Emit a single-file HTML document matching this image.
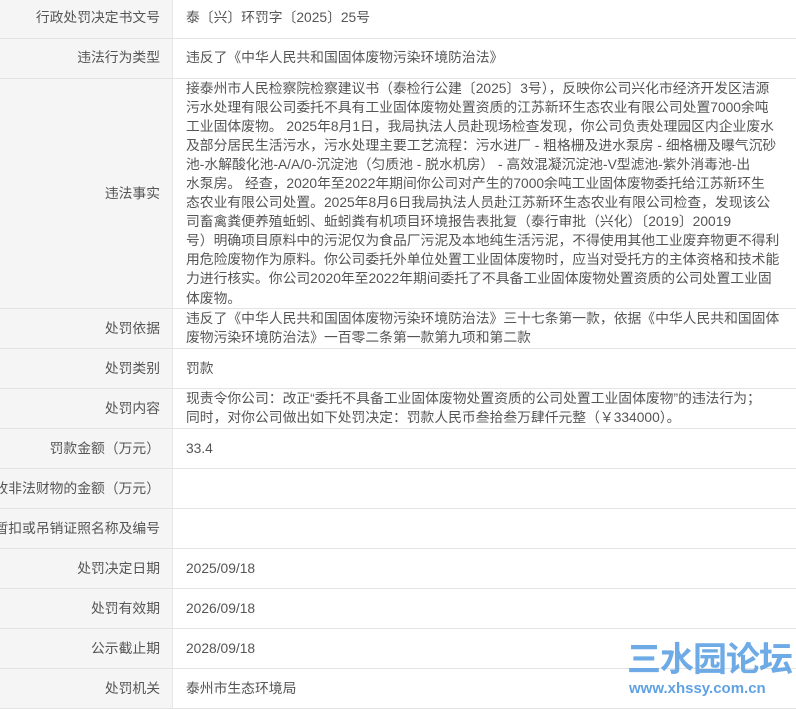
<!DOCTYPE html>
<html><head><meta charset="utf-8"><style>
body{margin:0;width:796px;height:706px;overflow:hidden;background:#fff;font-family:"Liberation Sans","Noto Sans CJK SC",sans-serif;font-size:13.8px;color:#555;position:relative}
table{border-collapse:collapse;position:absolute;left:0;top:-2px;width:796px;table-layout:fixed}
td{border-bottom:1px solid #e3e3e3;padding:0;vertical-align:middle;line-height:19.1px}
td.l{width:160px;background:#f5f5f5;text-align:right;padding-right:12px;white-space:nowrap;overflow:hidden;direction:rtl;border-right:1px solid #e8e8e8}
td.v{padding-left:13px;white-space:nowrap;overflow:hidden}
.wm{position:absolute;left:627px;top:636px;color:#5fa2e4;font-weight:bold;font-size:34px;letter-spacing:-1px;line-height:42px;font-family:"Noto Sans CJK SC",sans-serif;white-space:nowrap;opacity:.9}
.wm2{position:absolute;left:629px;top:680px;color:#5fa2e4;font-weight:bold;font-size:15px;line-height:18px;white-space:nowrap}
</style></head><body>
<table>
<tr style="height:40px"><td class="l">行政处罚决定书文号</td><td class="v">泰〔兴〕环罚字〔2025〕25号</td></tr>
<tr style="height:40px"><td class="l">违法行为类型</td><td class="v">违反了《中华人民共和国固体废物污染环境防治法》</td></tr>
<tr style="height:230px"><td class="l">违法事实</td><td class="v">接泰州市人民检察院检察建议书（泰检行公建〔2025〕3号），反映你公司兴化市经济开发区洁源<br>污水处理有限公司委托不具有工业固体废物处置资质的江苏新环生态农业有限公司处置7000余吨<br>工业固体废物。 2025年8月1日，我局执法人员赴现场检查发现，你公司负责处理园区内企业废水<br>及部分居民生活污水，污水处理主要工艺流程：污水进厂 - 粗格栅及进水泵房 - 细格栅及曝气沉砂<br>池-水解酸化池-A/A/0-沉淀池（匀质池 - 脱水机房） - 高效混凝沉淀池-V型滤池-紫外消毒池-出<br>水泵房。 经查，2020年至2022年期间你公司对产生的7000余吨工业固体废物委托给江苏新环生<br>态农业有限公司处置。2025年8月6日我局执法人员赴江苏新环生态农业有限公司检查，发现该公<br>司畜禽粪便养殖蚯蚓、蚯蚓粪有机项目环境报告表批复（泰行审批（兴化）〔2019〕20019<br>号）明确项目原料中的污泥仅为食品厂污泥及本地纯生活污泥，不得使用其他工业废弃物更不得利<br>用危险废物作为原料。你公司委托外单位处置工业固体废物时，应当对受托方的主体资格和技术能<br>力进行核实。你公司2020年至2022年期间委托了不具备工业固体废物处置资质的公司处置工业固<br>体废物。</td></tr>
<tr style="height:40px"><td class="l">处罚依据</td><td class="v">违反了《中华人民共和国固体废物污染环境防治法》三十七条第一款，依据《中华人民共和国固体<br>废物污染环境防治法》一百零二条第一款第九项和第二款</td></tr>
<tr style="height:40px"><td class="l">处罚类别</td><td class="v">罚款</td></tr>
<tr style="height:40px"><td class="l">处罚内容</td><td class="v">现责令你公司：改正“委托不具备工业固体废物处置资质的公司处置工业固体废物”的违法行为；<br>同时，对你公司做出如下处罚决定：罚款人民币叁拾叁万肆仟元整（￥334000）。</td></tr>
<tr style="height:40px"><td class="l">罚款金额（万元）</td><td class="v">33.4</td></tr>
<tr style="height:40px"><td class="l">没收违法所得、没收非法财物的金额（万元）</td><td class="v"></td></tr>
<tr style="height:40px"><td class="l">暂扣或吊销证照名称及编号</td><td class="v"></td></tr>
<tr style="height:40px"><td class="l">处罚决定日期</td><td class="v">2025/09/18</td></tr>
<tr style="height:40px"><td class="l">处罚有效期</td><td class="v">2026/09/18</td></tr>
<tr style="height:40px"><td class="l">公示截止期</td><td class="v">2028/09/18</td></tr>
<tr style="height:40px"><td class="l">处罚机关</td><td class="v">泰州市生态环境局</td></tr>
</table>
<div class="wm">三水园论坛</div>
<div class="wm2">www.xhssy.com.cn</div>
</body></html>
